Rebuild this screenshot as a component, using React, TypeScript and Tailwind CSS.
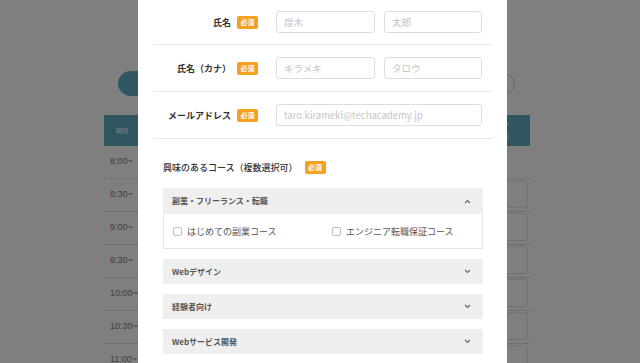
const font = { fontFamily: '"Noto Sans CJK JP", "Noto Sans", sans-serif' }

const times = ['8:00~', '8:30~', '9:00~', '9:30~', '10:00~', '10:30~', '11:00~']
const days = ['月', '火', '水', '木', '金', '土', '日']

const Badge = () => (
  <span className="inline-flex h-[13px] w-[21px] items-center justify-center rounded-[2px] bg-[#f4a020] text-[7px] font-bold leading-none text-white">
    必須
  </span>
)

const Chevron = ({ up }: { up?: boolean }) => (
  <svg width="7" height="5" viewBox="0 0 7 5" className="text-[#666]">
    <path
      d={up ? 'M1 4 L3.5 1.5 L6 4' : 'M1 1 L3.5 3.5 L6 1'}
      fill="none"
      stroke="currentColor"
      strokeWidth="1.1"
    />
  </svg>
)

const Row = ({
  label,
  fields,
  first,
}: {
  label: string
  fields: { ph: string; w: string }[]
  first?: boolean
}) => (
  <div
    className={`flex items-center border-b border-[#e8e8e8] pr-[10px] ${
      first ? 'pt-[11px] pb-[11px]' : 'py-[12px]'
    }`}
  >
    <div className="flex w-[104px] items-center justify-end gap-[6px]">
      <span className="text-[9px] font-bold leading-none text-[#333]">{label}</span>
      <Badge />
    </div>
    <div className="ml-[18px] flex flex-1 gap-[9px]">
      {fields.map((f) => (
        <input
          key={f.ph}
          readOnly
          placeholder={f.ph}
          className={`h-[22px] ${f.w} rounded-[3px] border border-[#dedede] px-[7px] text-[9.5px] text-[#333] outline-none placeholder:text-[#c4c4c4]`}
        />
      ))}
    </div>
  </div>
)

const Check = ({ label, w }: { label: string; w?: string }) => (
  <label className={`flex items-center gap-[5px] ${w ?? ''}`}>
    <span className="h-[9px] w-[9px] rounded-[2px] border border-[#bdbdbd] bg-white" />
    <span className="text-[9px] leading-none text-[#555]">{label}</span>
  </label>
)

const Closed = ({ title }: { title: string }) => (
  <div className="mt-[10px] flex h-[25px] items-center justify-between bg-[#efefef] pl-[9px] pr-[12px]">
    <span className="text-[8px] font-bold text-[#555]">{title}</span>
    <Chevron />
  </div>
)

export default function App() {
  return (
    <div className="relative h-[363px] w-[640px] overflow-hidden bg-white" style={font}>
      {/* page behind the modal */}
      <div className="flex flex-col pl-[104px] pr-[110px] pt-[71px]">
        <div className="flex h-[25px] items-center justify-between">
          <div className="ml-[14px] h-[25px] w-[120px] rounded-full bg-[#5eacc2]" />
          <div className="mr-[15px] h-[21px] w-[110px] rounded-full border border-[#cfcfcf] bg-white" />
        </div>
        <div className="mt-[19px] flex h-[31px] bg-[#5eacc2] text-white">
          <div className="flex w-[36px] items-center justify-center text-[6px]">時間</div>
          {days.map((d, i) => (
            <div key={d} className="flex flex-1 flex-col items-center justify-center text-[8px] leading-tight">
              {i === days.length - 1 && (
                <>
                  <span>4/7</span>
                  <span>({d})</span>
                </>
              )}
            </div>
          ))}
        </div>
        {times.map((t, i) => (
          <div
            key={t}
            className={`flex h-[33px] border-b border-[#dcdcdc] ${i === 0 ? 'border-dashed' : ''}`}
          >
            <div
              className="flex w-[36px] items-center pl-[6px] text-[9px] text-[#808080]"
              style={{ fontFamily: '"Liberation Sans", sans-serif' }}
            >
              {t}
            </div>
            {days.map((d) => (
              <div key={d} className="flex flex-1 items-start justify-center px-[2px] pt-[1px]">
                {i > 0 && <div className="h-[28px] w-full rounded-[3px] border border-[#e6e6e6] bg-white" />}
              </div>
            ))}
          </div>
        ))}
      </div>

      {/* overlay */}
      <div className="absolute inset-0 bg-black/50" />

      {/* modal */}
      <div className="absolute left-[138px] top-0 flex h-full w-[369px] flex-col bg-white pl-[16px] pr-[15px]">
        <Row
          first
          label="氏名"
          fields={[
            { ph: '煌木', w: 'w-[99px]' },
            { ph: '太郎', w: 'w-[98px]' },
          ]}
        />
        <Row
          label="氏名（カナ）"
          fields={[
            { ph: 'キラメキ', w: 'w-[99px]' },
            { ph: 'タロウ', w: 'w-[98px]' },
          ]}
        />
        <Row label="メールアドレス" fields={[{ ph: 'taro.kirameki@techacademy.jp', w: 'w-[206px]' }]} />

        <div className="px-[9px] pt-[22px]">
          <div className="flex h-[13px] items-center gap-[7px]">
            <span className="text-[9px] font-medium text-[#333]">興味のあるコース（複数選択可）</span>
            <Badge />
          </div>

          <div className="mt-[14px]">
            <div className="flex h-[26px] items-center justify-between bg-[#efefef] pl-[9px] pr-[12px]">
              <span className="text-[8px] font-bold text-[#555]">副業・フリーランス・転職</span>
              <Chevron up />
            </div>
            <div className="flex h-[35px] items-center border border-t-0 border-[#e2e2e2] pl-[9px]">
              <Check label="はじめての副業コース" w="w-[159px]" />
              <Check label="エンジニア転職保証コース" />
            </div>
          </div>
          <Closed title="Webデザイン" />
          <Closed title="経験者向け" />
          <Closed title="Webサービス開発" />
        </div>
      </div>
    </div>
  )
}
